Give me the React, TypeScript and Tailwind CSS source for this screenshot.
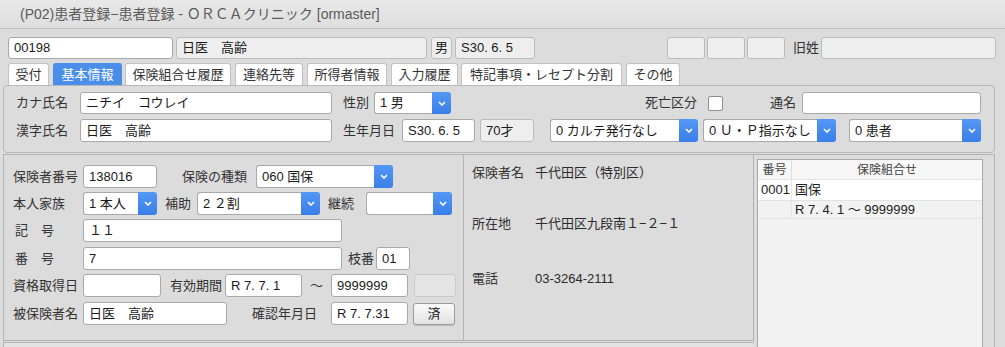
import clsx from "clsx";

function Field({ className = "", value = "", gray = false, center = false }: { className?: string; value?: string; gray?: boolean; center?: boolean }) {
  return (
    <div
      className={clsx(
        "h-full shrink-0 flex items-center border rounded-[3px] text-[13px] text-[#1a1a1a] px-[5px] whitespace-nowrap overflow-hidden",
        gray ? "bg-[#eeeeee] border-[#bcbcbc]" : "bg-white border-[#a9a9a9]",
        center && "justify-center",
        className
      )}
    >
      {value}
    </div>
  );
}

function Select({ className = "", value = "" }: { className?: string; value?: string }) {
  return (
    <div className={clsx("h-full shrink-0 flex", className)}>
      <div className="flex-1 flex items-center bg-white border border-r-0 border-[#a9a9a9] rounded-l-[3px] px-[5px] text-[13px] text-[#1a1a1a] whitespace-nowrap overflow-hidden">
        {value}
      </div>
      <div className="w-[19px] flex items-center justify-center rounded-r-[3px] bg-linear-to-b from-[#5497f4] to-[#3a7ee9]">
        <svg width="8" height="5" viewBox="0 0 8 5">
          <path d="M1 1l3 3 3-3" stroke="white" strokeWidth="1.6" fill="none" />
        </svg>
      </div>
    </div>
  );
}

function Label({ className = "", children }: { className?: string; children: React.ReactNode }) {
  return <span className={clsx("shrink-0 text-[13px] text-[#333] whitespace-nowrap", className)}>{children}</span>;
}

const tabs = [
  { t: "受付", c: "w-[41px]" },
  { t: "基本情報", c: "ml-[4px] w-[69px]", active: true },
  { t: "保険組合せ履歴", c: "ml-[3px] w-[106px]" },
  { t: "連絡先等", c: "ml-[4px] w-[68px]" },
  { t: "所得者情報", c: "ml-[4px] w-[80px]" },
  { t: "入力履歴", c: "ml-[4px] w-[67px]" },
  { t: "特記事項・レセプト分割", c: "ml-[3px] w-[161px]" },
  { t: "その他", c: "ml-[4px] w-[54px]" },
];

export default function App() {
  return (
    <div className="w-[1005px] h-[347px] overflow-hidden bg-[#dcdcdc] font-['Liberation_Sans','Noto_Sans_CJK_JP',sans-serif]">
      {/* title bar */}
      <div className="h-[29px] border-b border-[#c2c2c2] bg-linear-to-b from-[#e9e9e9] to-[#dedede] pl-[20px] text-[14px] leading-[28px] text-[#5a5a5a]">
        (P02)患者登録−患者登録 - ＯＲＣＡクリニック [ormaster]
      </div>

      {/* patient header */}
      <div className="flex items-center h-[22px] mt-[8px] pl-[8px]">
        <Field className="w-[165px]" value="00198" />
        <Field className="ml-[3px] w-[251px]" gray value="日医　高齢" />
        <Field className="ml-[4px] w-[21px]" gray center value="男" />
        <Field className="ml-[3px] w-[80px]" gray value="S30. 6. 5" />
        <Field className="ml-[132px] w-[38px]" gray />
        <Field className="ml-[2px] w-[38px]" gray />
        <Field className="ml-[2px] w-[38px]" gray />
        <Label className="ml-[8px] w-[28px]">旧姓</Label>
        <Field className="w-[175px]" gray />
      </div>

      {/* tabs */}
      <div className="flex h-[22px] mt-[4px] pl-[8px]">
        {tabs.map((tab) => (
          <div
            key={tab.t}
            className={clsx(
              "h-full flex items-center justify-center border border-b-0 rounded-t-[3px] text-[13px] whitespace-nowrap",
              tab.active ? "bg-[#4a8ee9] border-[#4a8ee9] text-white" : "bg-white border-[#c3c3c3] text-[#333]",
              tab.c
            )}
          >
            {tab.t}
          </div>
        ))}
      </div>

      {/* basic info panel */}
      <div className="ml-[3px] w-[992px] h-[68px] border border-[#b9b9b9] rounded-[4px] pt-[6px] pl-[12px]">
        <div className="flex items-center h-[22px]">
          <Label className="w-[64px]">カナ氏名</Label>
          <Field className="w-[252px]" value="ニチイ　コウレイ" />
          <Label className="ml-[11px] w-[31px]">性別</Label>
          <Select className="w-[77px]" value="1 男" />
          <Label className="ml-[194px] w-[63px]">死亡区分</Label>
          <div className="w-[15px] h-[15px] bg-white border border-[#8e8e8e] rounded-[2px]" />
          <Label className="ml-[47px] w-[32px]">通名</Label>
          <Field className="w-[179px]" />
        </div>
        <div className="flex items-center h-[23px] mt-[5px]">
          <Label className="w-[64px]">漢字氏名</Label>
          <Field className="w-[252px]" value="日医　高齢" />
          <Label className="ml-[11px] w-[59px]">生年月日</Label>
          <Field className="w-[73px]" value="S30. 6. 5" />
          <Field className="ml-[5px] w-[54px]" gray value="70才" />
          <Select className="ml-[16px] w-[148px]" value="0 カルテ発行なし" />
          <Select className="ml-[5px] w-[133px]" value="0 Ｕ・Ｐ指示なし" />
          <Select className="ml-[13px] w-[132px]" value="0 患者" />
        </div>
      </div>

      {/* lower area */}
      <div className="flex mt-[1px]">
        <div className="flex flex-col">
          <div className="flex">
            {/* insurance panel */}
            <div className="ml-[3px] w-[461px] h-[187px] border border-[#b3b3b3] pt-[10px] pl-[9px]">
              <div className="flex items-center h-[23px]">
                <Label className="w-[70px]">保険者番号</Label>
                <Field className="w-[74px]" value="138016" />
                <Label className="ml-[25px] w-[74px]">保険の種類</Label>
                <Select className="w-[137px]" value="060 国保" />
              </div>
              <div className="flex items-center h-[23px] mt-[4px]">
                <Label className="w-[70px]">本人家族</Label>
                <Select className="w-[74px]" value="1 本人" />
                <Label className="ml-[8px] w-[32px]">補助</Label>
                <Select className="w-[123px]" value="2 ２割" />
                <Label className="ml-[8px] w-[38px]">継続</Label>
                <Select className="w-[86px]" />
              </div>
              <div className="flex items-center h-[23px] mt-[4px]">
                <Label className="w-[70px] pl-[2px]">記　号</Label>
                <Field className="w-[259px]" value="１１" />
              </div>
              <div className="flex items-center h-[23px] mt-[5px]">
                <Label className="w-[70px] pl-[2px]">番　号</Label>
                <Field className="w-[259px]" value="7" />
                <Label className="ml-[6px] w-[28px]">枝番</Label>
                <Field className="w-[34px]" value="01" />
              </div>
              <div className="flex items-center h-[23px] mt-[4px]">
                <Label className="w-[70px]">資格取得日</Label>
                <Field className="w-[78px]" />
                <Label className="ml-[9px] w-[55px]">有効期間</Label>
                <Field className="w-[77px]" value="R 7. 7. 1" />
                <Label className="w-[29px] text-center">〜</Label>
                <Field className="w-[77px]" value="9999999" />
                <div className="ml-[6px] w-[42px] h-full bg-[#e4e4e4] border border-[#c9c9c9] rounded-[3px]" />
              </div>
              <div className="flex items-center h-[23px] mt-[5px]">
                <Label className="w-[70px]">被保険者名</Label>
                <Field className="w-[144px]" value="日医　高齢" />
                <Label className="ml-[25px] w-[79px]">確認年月日</Label>
                <Field className="w-[77px]" value="R 7. 7.31" />
                <button className="ml-[5px] w-[42px] h-[22px] flex items-center justify-center border border-[#9c9c9c] rounded-[3px] bg-linear-to-b from-[#fbfbfb] to-[#e2e2e2] text-[13px] text-[#222] shadow-[0_1px_1px_rgba(0,0,0,0.15)]">
                  済
                </button>
              </div>
            </div>

            {/* insurer info panel */}
            <div className="w-[290px] h-[187px] border-y border-r border-[#b3b3b3] pt-[9px] pl-[8px] text-[13px] text-[#2a2a2a]">
              <div className="flex items-center h-[18px]">
                <Label className="w-[63px]">保険者名</Label>
                <span>千代田区（特別区）</span>
              </div>
              <div className="flex items-center h-[18px] mt-[33px]">
                <Label className="w-[63px]">所在地</Label>
                <span>千代田区九段南１−２−１</span>
              </div>
              <div className="flex items-center h-[18px] mt-[37px]">
                <Label className="w-[63px]">電話</Label>
                <span>03-3264-2111</span>
              </div>
            </div>
          </div>
          <div className="ml-[3px] mt-[1px] w-[751px] h-[20px] border-t border-l border-[#b3b3b3] bg-[#e3e3e3]" />
        </div>

        {/* combination list */}
        <div className="w-[241px] h-[200px] border-t border-r border-[#b3b3b3] pl-[3px] pt-[4px]">
          <div className="w-[226px] h-[200px] border border-[#a9a9a9] bg-[#f2f2f2] text-[13px] text-[#222]">
            <div className="flex h-[20px] bg-[#f7f7f7] border-b border-[#e2e2e2] text-[12px] text-[#444]">
              <div className="w-[34px] border-r border-[#dcdcdc] flex items-center justify-center">番号</div>
              <div className="flex-1 flex items-center justify-center">保険組合せ</div>
            </div>
            <div className="flex h-[20px] bg-white">
              <div className="w-[34px] border-r border-[#e6e6e6] flex items-center pl-[3px]">0001</div>
              <div className="flex-1 flex items-center pl-[3px]">国保</div>
            </div>
            <div className="flex h-[19px] border-y border-[#e2e2e2]">
              <div className="w-[34px] border-r border-[#e6e6e6]" />
              <div className="flex-1 flex items-center pl-[3px]">R 7. 4. 1 〜 9999999</div>
            </div>
          </div>
        </div>
      </div>
    </div>
  );
}
